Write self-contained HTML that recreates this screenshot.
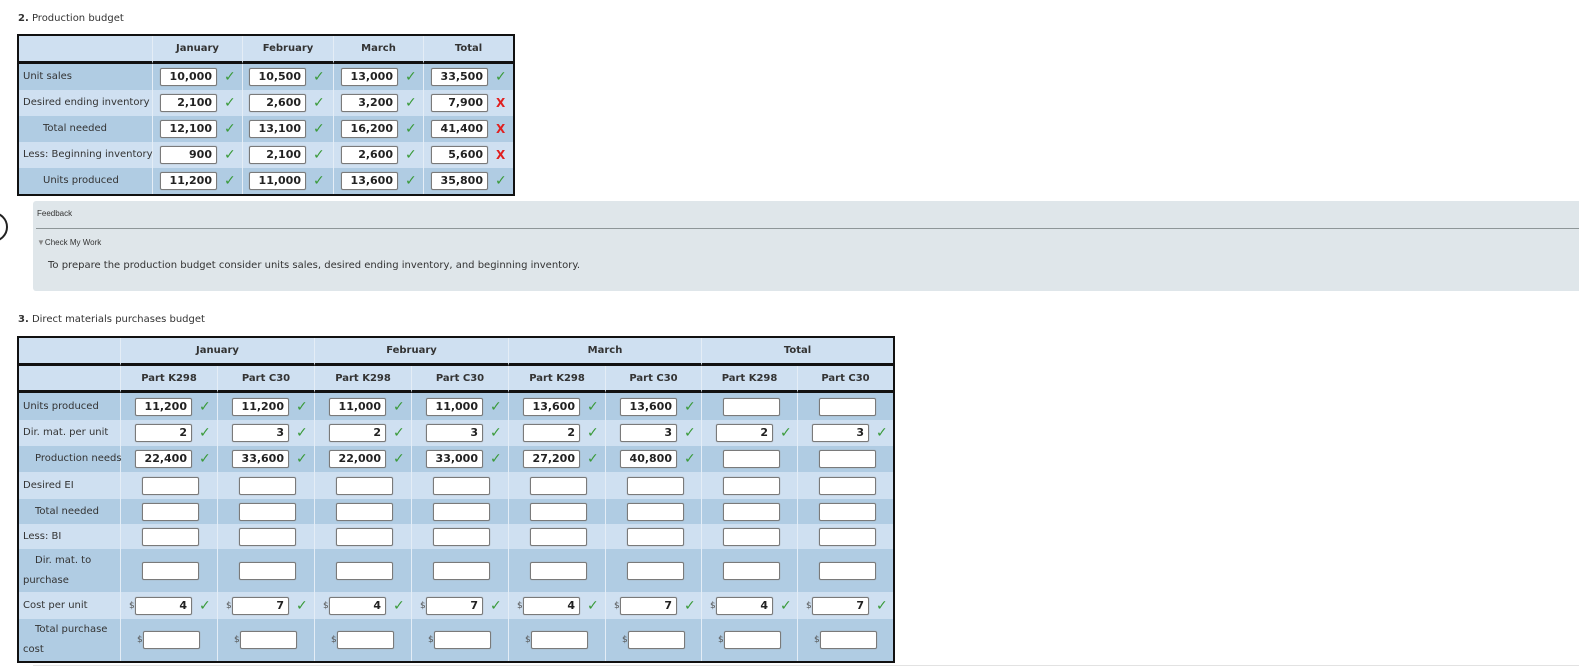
<!DOCTYPE html>
<html><head><meta charset="utf-8"><style>
*{box-sizing:border-box;margin:0;padding:0}
body{width:1579px;height:672px;background:#fff;font-family:"DejaVu Sans","Liberation Sans",sans-serif;color:#333;position:relative;overflow:hidden}
.abs{position:absolute}
.title{font-size:10px;color:#333}
table{border-collapse:separate;border-spacing:0;position:absolute;border:2px solid #111;table-layout:fixed}
td,th{padding:0;font-size:10px;vertical-align:middle;border-left:1px solid #e4edf6}
td:first-child,th:first-child{border-left:none}
th{font-weight:bold;color:#333;background:#cfe0f1;text-align:center;border-bottom:3px solid #111}
tr.d td{background:#b0cce3}
tr.l td{background:#cfe0f1}
.lab{padding-left:4px;white-space:nowrap;line-height:20px}
.ind{padding-left:24px}
.box{display:inline-block;width:57px;height:18px;background:#fff;border:1px solid #7a7a7a;border-radius:2px;box-shadow:0 0 1px #999;font-weight:bold;font-size:11px;text-align:right;padding-right:4px;line-height:16px;color:#222;vertical-align:middle}
.ok{display:inline-block;color:#3a9a3a;font-size:14px;font-weight:bold;margin-left:7px;vertical-align:middle;width:11px}
.x{display:inline-block;color:#e02020;font-size:12px;font-weight:bold;margin-left:8px;vertical-align:middle;width:10px}
.dol{display:inline-block;font-size:9px;color:#555;width:6px;vertical-align:middle}
</style></head><body>
<div class="abs title" style="left:18px;top:13px"><b>2.</b> Production budget</div>
<table style="left:17px;top:34px;width:498px">
<colgroup><col style="width:133px"><col style="width:90px"><col style="width:91px"><col style="width:90px"><col style="width:90px"></colgroup>
<tr style="height:28px"><th></th><th>January</th><th>February</th><th>March</th><th>Total</th></tr>
<tr class="d" style="height:26px"><td class="lab">Unit sales</td><td style="padding-left:7px"><span class="box">10,000</span><span class="ok">✓</span></td><td style="padding-left:6px"><span class="box">10,500</span><span class="ok">✓</span></td><td style="padding-left:7px"><span class="box">13,000</span><span class="ok">✓</span></td><td style="padding-left:7px"><span class="box">33,500</span><span class="ok">✓</span></td></tr>
<tr class="l" style="height:26px"><td class="lab">Desired ending inventory</td><td style="padding-left:7px"><span class="box">2,100</span><span class="ok">✓</span></td><td style="padding-left:6px"><span class="box">2,600</span><span class="ok">✓</span></td><td style="padding-left:7px"><span class="box">3,200</span><span class="ok">✓</span></td><td style="padding-left:7px"><span class="box">7,900</span><span class="x">X</span></td></tr>
<tr class="d" style="height:26px"><td class="lab ind">Total needed</td><td style="padding-left:7px"><span class="box">12,100</span><span class="ok">✓</span></td><td style="padding-left:6px"><span class="box">13,100</span><span class="ok">✓</span></td><td style="padding-left:7px"><span class="box">16,200</span><span class="ok">✓</span></td><td style="padding-left:7px"><span class="box">41,400</span><span class="x">X</span></td></tr>
<tr class="l" style="height:26px"><td class="lab">Less: Beginning inventory</td><td style="padding-left:7px"><span class="box">900</span><span class="ok">✓</span></td><td style="padding-left:6px"><span class="box">2,100</span><span class="ok">✓</span></td><td style="padding-left:7px"><span class="box">2,600</span><span class="ok">✓</span></td><td style="padding-left:7px"><span class="box">5,600</span><span class="x">X</span></td></tr>
<tr class="d" style="height:26px"><td class="lab ind">Units produced</td><td style="padding-left:7px"><span class="box">11,200</span><span class="ok">✓</span></td><td style="padding-left:6px"><span class="box">11,000</span><span class="ok">✓</span></td><td style="padding-left:7px"><span class="box">13,600</span><span class="ok">✓</span></td><td style="padding-left:7px"><span class="box">35,800</span><span class="ok">✓</span></td></tr>
</table>

<div class="abs" style="left:-22px;top:212px;width:30px;height:30px;border:2px solid #222;border-radius:50%"></div>
<div class="abs" style="left:33px;top:201px;width:1560px;height:90px;background:#dfe6ea;border-radius:3px">
  <div class="abs" style="left:4px;top:8px;font-size:8px;font-family:'Liberation Sans',sans-serif;color:#333">Feedback</div>
  <div class="abs" style="left:3px;top:27px;width:1560px;height:1px;background:#8e9698"></div>
  <div class="abs" style="left:4px;top:37px;font-size:8px;font-family:'Liberation Sans',sans-serif;color:#333"><span style="color:#888">▼</span>Check My Work</div>
  <div class="abs" style="left:15px;top:59px;font-size:10px;color:#333">To prepare the production budget consider units sales, desired ending inventory, and beginning inventory.</div>
</div>

<div class="abs title" style="left:18px;top:314px"><b>3.</b> Direct materials purchases budget</div>
<table style="left:17px;top:336px;width:878px">
<colgroup><col style="width:101px"><col style="width:97px"><col style="width:97px"><col style="width:97px"><col style="width:97px"><col style="width:97px"><col style="width:96px"><col style="width:96px"><col style="width:96px"></colgroup>
<tr style="height:28px"><th></th><th colspan="2">January</th><th colspan="2">February</th><th colspan="2">March</th><th colspan="2">Total</th></tr>
<tr style="height:27px"><th></th><th>Part K298</th><th>Part C30</th><th>Part K298</th><th>Part C30</th><th>Part K298</th><th>Part C30</th><th>Part K298</th><th>Part C30</th></tr>
<tr class="d" style="height:27px"><td class="lab">Units produced</td>
<td style="padding-left:14px"><span class="box">11,200</span><span class="ok">✓</span></td>
<td style="padding-left:14px"><span class="box">11,200</span><span class="ok">✓</span></td>
<td style="padding-left:14px"><span class="box">11,000</span><span class="ok">✓</span></td>
<td style="padding-left:14px"><span class="box">11,000</span><span class="ok">✓</span></td>
<td style="padding-left:14px"><span class="box">13,600</span><span class="ok">✓</span></td>
<td style="padding-left:14px"><span class="box">13,600</span><span class="ok">✓</span></td>
<td style="padding-left:21px"><span class="box"></span></td>
<td style="padding-left:21px"><span class="box"></span></td></tr>
<tr class="l" style="height:26px"><td class="lab">Dir. mat. per unit</td>
<td style="padding-left:14px"><span class="box">2</span><span class="ok">✓</span></td>
<td style="padding-left:14px"><span class="box">3</span><span class="ok">✓</span></td>
<td style="padding-left:14px"><span class="box">2</span><span class="ok">✓</span></td>
<td style="padding-left:14px"><span class="box">3</span><span class="ok">✓</span></td>
<td style="padding-left:14px"><span class="box">2</span><span class="ok">✓</span></td>
<td style="padding-left:14px"><span class="box">3</span><span class="ok">✓</span></td>
<td style="padding-left:14px"><span class="box">2</span><span class="ok">✓</span></td>
<td style="padding-left:14px"><span class="box">3</span><span class="ok">✓</span></td></tr>
<tr class="d" style="height:26px"><td class="lab" style="padding-left:16px">Production needs</td>
<td style="padding-left:14px"><span class="box">22,400</span><span class="ok">✓</span></td>
<td style="padding-left:14px"><span class="box">33,600</span><span class="ok">✓</span></td>
<td style="padding-left:14px"><span class="box">22,000</span><span class="ok">✓</span></td>
<td style="padding-left:14px"><span class="box">33,000</span><span class="ok">✓</span></td>
<td style="padding-left:14px"><span class="box">27,200</span><span class="ok">✓</span></td>
<td style="padding-left:14px"><span class="box">40,800</span><span class="ok">✓</span></td>
<td style="padding-left:21px"><span class="box"></span></td>
<td style="padding-left:21px"><span class="box"></span></td></tr>
<tr class="l" style="height:27px"><td class="lab">Desired EI</td>
<td style="padding-left:21px"><span class="box"></span></td><td style="padding-left:21px"><span class="box"></span></td><td style="padding-left:21px"><span class="box"></span></td><td style="padding-left:21px"><span class="box"></span></td><td style="padding-left:21px"><span class="box"></span></td><td style="padding-left:21px"><span class="box"></span></td><td style="padding-left:21px"><span class="box"></span></td><td style="padding-left:21px"><span class="box"></span></td></tr>
<tr class="d" style="height:25px"><td class="lab" style="padding-left:16px">Total needed</td>
<td style="padding-left:21px"><span class="box"></span></td><td style="padding-left:21px"><span class="box"></span></td><td style="padding-left:21px"><span class="box"></span></td><td style="padding-left:21px"><span class="box"></span></td><td style="padding-left:21px"><span class="box"></span></td><td style="padding-left:21px"><span class="box"></span></td><td style="padding-left:21px"><span class="box"></span></td><td style="padding-left:21px"><span class="box"></span></td></tr>
<tr class="l" style="height:25px"><td class="lab">Less: BI</td>
<td style="padding-left:21px"><span class="box"></span></td><td style="padding-left:21px"><span class="box"></span></td><td style="padding-left:21px"><span class="box"></span></td><td style="padding-left:21px"><span class="box"></span></td><td style="padding-left:21px"><span class="box"></span></td><td style="padding-left:21px"><span class="box"></span></td><td style="padding-left:21px"><span class="box"></span></td><td style="padding-left:21px"><span class="box"></span></td></tr>
<tr class="d" style="height:43px"><td class="lab" style="white-space:normal"><span style="padding-left:12px">Dir. mat. to</span><br>purchase</td>
<td style="padding-left:21px"><span class="box"></span></td><td style="padding-left:21px"><span class="box"></span></td><td style="padding-left:21px"><span class="box"></span></td><td style="padding-left:21px"><span class="box"></span></td><td style="padding-left:21px"><span class="box"></span></td><td style="padding-left:21px"><span class="box"></span></td><td style="padding-left:21px"><span class="box"></span></td><td style="padding-left:21px"><span class="box"></span></td></tr>
<tr class="l" style="height:27px"><td class="lab">Cost per unit</td>
<td style="padding-left:8px"><span class="dol">$</span><span class="box">4</span><span class="ok">✓</span></td>
<td style="padding-left:8px"><span class="dol">$</span><span class="box">7</span><span class="ok">✓</span></td>
<td style="padding-left:8px"><span class="dol">$</span><span class="box">4</span><span class="ok">✓</span></td>
<td style="padding-left:8px"><span class="dol">$</span><span class="box">7</span><span class="ok">✓</span></td>
<td style="padding-left:8px"><span class="dol">$</span><span class="box">4</span><span class="ok">✓</span></td>
<td style="padding-left:8px"><span class="dol">$</span><span class="box">7</span><span class="ok">✓</span></td>
<td style="padding-left:8px"><span class="dol">$</span><span class="box">4</span><span class="ok">✓</span></td>
<td style="padding-left:8px"><span class="dol">$</span><span class="box">7</span><span class="ok">✓</span></td></tr>
<tr class="d" style="height:42px"><td class="lab" style="white-space:normal"><span style="padding-left:12px">Total purchase</span><br>cost</td>
<td style="padding-left:16px"><span class="dol">$</span><span class="box"></span></td><td style="padding-left:16px"><span class="dol">$</span><span class="box"></span></td><td style="padding-left:16px"><span class="dol">$</span><span class="box"></span></td><td style="padding-left:16px"><span class="dol">$</span><span class="box"></span></td><td style="padding-left:16px"><span class="dol">$</span><span class="box"></span></td><td style="padding-left:16px"><span class="dol">$</span><span class="box"></span></td><td style="padding-left:16px"><span class="dol">$</span><span class="box"></span></td><td style="padding-left:16px"><span class="dol">$</span><span class="box"></span></td></tr>
</table>
<div class="abs" style="left:33px;top:665px;width:1546px;height:1px;background:#e2e2e2"></div>
</body></html>
